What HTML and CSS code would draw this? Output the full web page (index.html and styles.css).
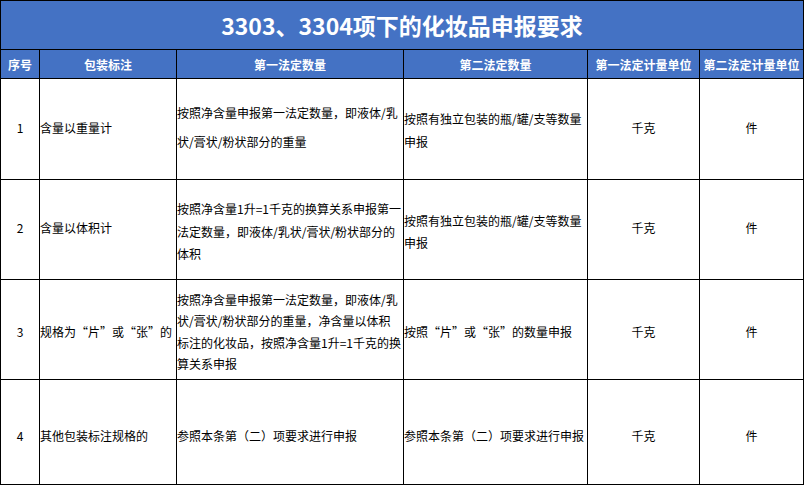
FILE: index.html
```html
<!DOCTYPE html>
<html lang="zh-CN">
<head>
<meta charset="utf-8">
<title>3303、3304项下的化妆品申报要求</title>
<link rel="stylesheet" href="styles.css">
</head>
<body>
<div class="sheet">
  <div class="title">3303、3304项下的化妆品申报要求</div>

  <div class="hd">序号</div>
  <div class="hd">包装标注</div>
  <div class="hd">第一法定数量</div>
  <div class="hd">第二法定数量</div>
  <div class="hd">第一法定计量单位</div>
  <div class="hd">第二法定计量单位</div>

  <div class="cell center r1">1</div>
  <div class="cell r1">含量以重量计</div>
  <div class="cell lh29 r1m">按照净含量申报第一法定数量，即液体/乳<br>状/膏状/粉状部分的重量</div>
  <div class="cell lh22 r1n">按照有独立包装的瓶/罐/支等数量<br>申报</div>
  <div class="cell center r1">千克</div>
  <div class="cell center r1">件</div>

  <div class="cell center r2">2</div>
  <div class="cell r2">含量以体积计</div>
  <div class="cell lh22 r2m">按照净含量1升=1千克的换算关系申报第一<br>法定数量，即液体/乳状/膏状/粉状部分的<br>体积</div>
  <div class="cell lh22 r2m">按照有独立包装的瓶/罐/支等数量<br>申报</div>
  <div class="cell center r2">千克</div>
  <div class="cell center r2">件</div>

  <div class="cell center r3">3</div>
  <div class="cell r3">规格为“片”或“张”的</div>
  <div class="cell lh21 r3">按照净含量申报第一法定数量，即液体/乳<br>状/膏状/粉状部分的重量，净含量以体积<br>标注的化妆品，按照净含量1升=1千克的换<br>算关系申报</div>
  <div class="cell r3">按照“片”或“张”的数量申报</div>
  <div class="cell center r3">千克</div>
  <div class="cell center r3">件</div>

  <div class="cell center r4">4</div>
  <div class="cell r4">其他包装标注规格的</div>
  <div class="cell r4">参照本条第（二）项要求进行申报</div>
  <div class="cell r4">参照本条第（二）项要求进行申报</div>
  <div class="cell center r4">千克</div>
  <div class="cell center r4">件</div>
</div>
</body>
</html>
```

FILE: styles.css
```css
html, body {
  margin: 0;
  padding: 0;
  background: #ffffff;
}

.sheet {
  display: grid;
  grid-template-columns: 38px 136px 226px 183px 111px 103px;
  grid-template-rows: 48px 28px 100px 99px 99px 104px;
  gap: 1px;
  padding: 1px;
  width: 804px;
  box-sizing: border-box;
  background: #000000;
  font-family: "Noto Sans CJK SC", "Noto Sans", sans-serif;
}

.title {
  grid-column: 1 / -1;
  background: #4472c4;
  color: #ffffff;
  font-size: 23px;
  font-weight: 700;
  display: flex;
  align-items: center;
  justify-content: center;
  letter-spacing: 0;
}

.hd {
  background: #4472c4;
  color: #ffffff;
  font-size: 12px;
  font-weight: 700;
  display: flex;
  align-items: center;
  justify-content: center;
  white-space: nowrap;
}

.cell {
  background: #ffffff;
  color: #000000;
  font-size: 12px;
  line-height: 16px;
  display: flex;
  align-items: center;
  white-space: nowrap;
  box-sizing: border-box;
}

.center {
  justify-content: center;
}

.lh29 { line-height: 29px; }
.lh22 { line-height: 22.5px; }
.lh21 { line-height: 21.3px; }

.r1 { padding-bottom: 3px; }
.r1m { padding-bottom: 4px; }
.r1n { padding-top: 3px; }
.r2 { padding-bottom: 4px; }
.r2m { padding-top: 5px; }
.r3 { padding-top: 4px; }
.r4 { padding-top: 7px; }
```
